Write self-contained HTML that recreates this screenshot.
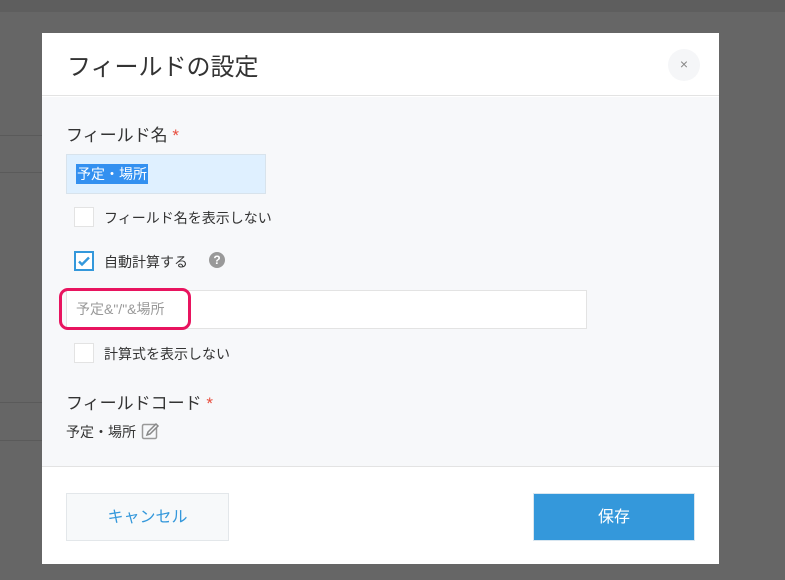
<!DOCTYPE html>
<html><head><meta charset="utf-8"><style>
*{box-sizing:border-box;margin:0;padding:0}
body{width:785px;height:580px;background:#666;position:relative;overflow:hidden;font-family:"Liberation Sans","Noto Sans CJK JP",sans-serif;color:#333}
.topband{position:absolute;left:0;top:0;width:785px;height:12px;background:#5e5e5e}
.ln{position:absolute;left:0;width:42px;height:1px;background:#5a5a5a}
.modal{position:absolute;left:42px;top:33px;width:677px;height:531px;background:#fff}
.hdr{height:63px;border-bottom:1px solid #e3e3e3;position:relative}
.hdr h1{position:absolute;left:25px;top:14px;font-size:24px;font-weight:normal;color:#333}
.close{position:absolute;left:626px;top:16px;width:32px;height:32px;border-radius:50%;background:#f5f6f8;color:#888;font-size:14px;text-align:center;line-height:31px}
.body{position:absolute;top:64px;left:0;width:677px;height:370px;background:#f7f8fa;border-bottom:1px solid #e3e3e3}
.lbl{position:absolute;font-size:17px;color:#333}
.lbl b{color:#e74c3c;font-weight:normal}
.cb{position:absolute;width:20px;height:20px;border:1px solid #e3e3e3;background:#fff}
.cbt{position:absolute;font-size:14px;color:#333}
.sel{position:absolute;left:24px;top:57px;width:200px;height:40px;background:#dff0ff;border:1px solid #d8e3ec}
.sel span{position:absolute;left:9px;top:9px;background:#3390f0;color:#fff;font-size:14px;padding:1px 1px;line-height:18px}
.inp{position:absolute;left:24px;top:193px;width:521px;height:39px;background:#fff;border:1px solid #e3e3e3}
.hl{position:absolute;left:17px;top:191px;width:132px;height:42px;border:3px solid #e8145f;border-radius:9px}
.btn{position:absolute;top:460px;height:48px;font-size:16px;text-align:center;line-height:48px}
</style></head><body>
<div class="topband"></div>
<div class="ln" style="top:135px"></div><div class="ln" style="top:172px"></div><div class="ln" style="top:402px"></div><div class="ln" style="top:440px"></div>
<div class="modal">
 <div class="hdr"><h1>フィールドの設定</h1><div class="close">×</div></div>
 <div class="body">
  <div class="lbl" style="left:24px;top:24px">フィールド名 <b>*</b></div>
  <div class="sel"><span>予定・場所</span></div>
  <div class="cb" style="left:32px;top:110px"></div>
  <div class="cbt" style="left:62px;top:111px">フィールド名を表示しない</div>
  <div class="cb" style="left:32px;top:154px;border:2px solid #3498db"><svg width="16" height="16" viewBox="0 0 16 16" style="position:absolute;left:0;top:0"><path d="M3 8.5l3 3 7-7" stroke="#3498db" stroke-width="2.4" fill="none"/></svg></div>
  <div class="cbt" style="left:62px;top:155px">自動計算する</div>
  <div style="position:absolute;left:167px;top:155px;width:16px;height:16px;border-radius:50%;background:#999;color:#fff;font-size:12px;font-weight:bold;text-align:center;line-height:16px">?</div>
  <div class="inp"></div>
  <div class="hl"></div>
  <div style="position:absolute;left:34px;top:202px;font-size:14px;color:#999">予定&amp;"/"&amp;場所</div>
  <div class="cb" style="left:32px;top:246px"></div>
  <div class="cbt" style="left:62px;top:247px">計算式を表示しない</div>
  <div class="lbl" style="left:24px;top:292px">フィールドコード <b>*</b></div>
  <div style="position:absolute;left:24px;top:325px;font-size:14px">予定・場所</div>
  <svg width="20" height="20" viewBox="0 0 20 20" style="position:absolute;left:99px;top:324px"><rect x="1.5" y="3.5" width="14" height="14" rx="1.5" fill="none" stroke="#999" stroke-width="1.5"/><path d="M6 14l1-3 8-8 2 2-8 8z" fill="#f7f8fa" stroke="#888" stroke-width="1.5"/></svg>
 </div>
 <div class="btn" style="left:24px;width:163px;background:#f7f9fa;border:1px solid #e3e7ea;color:#3498db">キャンセル</div>
 <div class="btn" style="left:491px;width:162px;background:#3498db;border:1px solid #d8e6f0;color:#fff">保存</div>
</div>
</body></html>
